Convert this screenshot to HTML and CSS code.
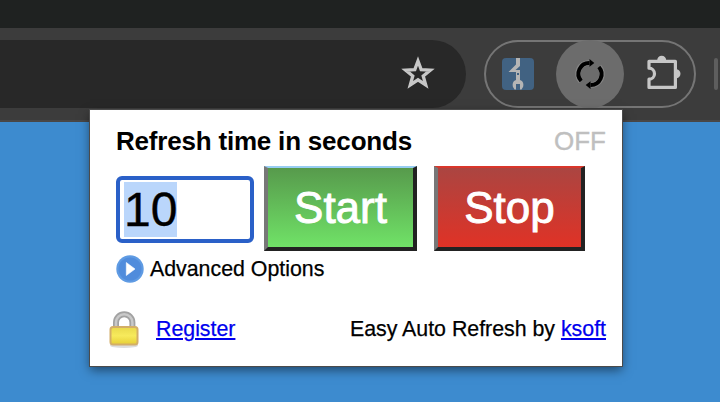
FILE: index.html
```html
<!DOCTYPE html>
<html lang="en">
<head>
<meta charset="utf-8">
<title>Easy Auto Refresh</title>
<link rel="stylesheet" href="styles.css">
</head>
<body>
<div class="tabstrip"></div>
<div class="toolbar">
  <div class="omnibox">
    <svg class="star" width="34" height="34" viewBox="0 0 34 34"><path d="M17 5l3.200 8.600 9.200.5-7.200 5.900 2.500 8.900-7.700-5.100-7.700 5.100 2.500-8.900-7.200-5.900 9.200-.5z" fill="none" stroke="#c7c7c7" stroke-width="3.300"/></svg>
  </div>
  <div class="extensions">
    <svg class="tool" width="32" height="32" viewBox="0 0 32 32">
      <rect width="32" height="32" rx="4" fill="#416282"/>
      <path d="M14 0h4v8l-4.500 4H18v10c3 1 4 4 3 7l-1.500 2.500H18V26h-4v5.500h-1.500L11 29c-1-3 0-6 3-7v-8H6.500L14 6.500z" fill="#b5b5b5"/>
      <rect x="15" y="15" width="2" height="2" fill="#416282"/>
    </svg>
    <div class="active">
      <svg width="34" height="34" viewBox="0 0 34 34">
        <g fill="none" stroke="#858585" stroke-width="5.500"><path d="M8 24.300A10.800 10.800 0 0 1 16.500 6"/><path d="M26 9.700A10.800 10.800 0 0 1 17.500 28"/></g>
        <g fill="none" stroke="#000" stroke-width="4"><path d="M8.200 24A10.800 10.800 0 0 1 16.500 6"/><path d="M25.800 10A10.800 10.800 0 0 1 17.500 28"/></g>
        <path d="M16.500 2l4.800 4-4.800 3.700zM17.500 24.300V32l-4.800-4z"/>
      </svg>
    </div>
    <svg class="puzzle" width="38" height="38" viewBox="0 0 38 38">
      <path d="M5 8.300H31.400V34.400H5V26.200A5.500 5.500 0 0 0 5 15.200z" fill="none" stroke="#c7c7c7" stroke-width="3.200" stroke-linejoin="round"/>
      <path d="M13.200 7.200a4.500 4.500 0 0 1 9 0zM32 16.200a4.500 4.500 0 0 1 0 9z" fill="#c7c7c7"/>
    </svg>
  </div>
  <div class="divider"></div>
</div>
<div class="popup">
  <div class="heading"><b>Refresh time in seconds</b><span class="status">OFF</span></div>
  <div class="controls">
    <div class="seconds"><span>10</span></div>
    <button class="start">Start</button>
    <button class="stop">Stop</button>
  </div>
  <div class="advanced">
    <svg width="28" height="28" viewBox="0 0 28 28"><circle cx="14" cy="14" r="13.700" fill="#5f9be3"/><circle cx="14" cy="14" r="11.500" fill="#508cdc"/><path d="M10.300 7.500L19 14l-8.700 6.500z" fill="#fff" stroke="#fff" stroke-width=".6"/></svg>
    <span>Advanced Options</span>
  </div>
  <div class="footer">
    <svg class="lock" width="32" height="40" viewBox="0 0 32 40">
      <defs><linearGradient id="gold" x2="0" y2="1"><stop stop-color="#e9d94b"/><stop offset=".5" stop-color="#f7ea5c"/><stop offset="1" stop-color="#e6cf35"/></linearGradient></defs>
      <ellipse cx="16" cy="35.500" rx="14" ry="2.500" fill="#ddd"/>
      <path d="M8 18V12.500a8.200 8.200 0 0 1 16.400 0V18" fill="none" stroke="#a2a2a2" stroke-width="6"/>
      <path d="M8 18V12.500a8.200 8.200 0 0 1 16.400 0V18" fill="none" stroke="#c9c9c9" stroke-width="2.500"/>
      <rect x="2.500" y="17" width="27" height="17.500" rx="2.500" fill="url(#gold)" stroke="#d3ae68" stroke-width="2"/>
    </svg>
    <a class="register" href="#">Register</a>
    <span class="credit">Easy Auto Refresh by <a href="#">ksoft</a></span>
  </div>
</div>
</body>
</html>
```
FILE: styles.css
```css
* { box-sizing: border-box; }
body {
  margin: 0;
  width: 720px;
  height: 402px;
  overflow: hidden;
  background: #3d8bcf;
  color: #000;
  font-family: "Liberation Sans", Arial, sans-serif;
}
svg { display: block; flex: none; }
.tabstrip { height: 28px; background: #1f2221; }
.toolbar {
  display: flex;
  height: 94px;
  padding-top: 12px;
  background: #3c3c3c;
  border-bottom: 2px solid #494747;
}
.omnibox {
  display: flex;
  justify-content: flex-end;
  width: 466px;
  height: 68px;
  padding: 16px 31px 0 0;
  border-radius: 0 34px 34px 0;
  background: #282828;
}
.extensions {
  display: flex;
  align-items: center;
  width: 212px;
  height: 68px;
  margin-left: 18px;
  padding-left: 16px;
  border: 2px solid #757575;
  border-radius: 34px;
}
.active {
  display: flex;
  align-items: center;
  justify-content: center;
  flex: none;
  width: 68px;
  height: 68px;
  margin-left: 22px;
  border-radius: 50%;
  background: #6c6c6c;
}
.puzzle { margin: -4px 0 0 20px; }
.divider {
  width: 4px;
  height: 32px;
  margin: 18px 0 0 18px;
  border-radius: 2px;
  background: #5e5e5e;
}
.popup {
  position: absolute;
  left: 90px;
  top: 110px;
  width: 532px;
  height: 256px;
  padding: 16px 16px 0 26px;
  background: #fff;
  box-shadow: 0 0 0 1px #4b4b4b, 0 4px 10px rgba(0, 0, 0, .5);
}
.heading {
  display: flex;
  justify-content: space-between;
  height: 40px;
  font-size: 26px;
  line-height: 30px;
  white-space: nowrap;
}
.heading b { letter-spacing: -.2px; }
.status { color: #bfbfbf; -webkit-text-stroke: .4px #bfbfbf; }
.controls { display: flex; height: 85px; }
.seconds {
  width: 138px;
  height: 67px;
  margin: 10px 10px 0 0;
  padding: 2px 4px;
  border: 4px solid #2a60c8;
  border-radius: 6px;
  font-size: 48px;
}
.seconds span {
  display: inline-block;
  height: 55px;
  line-height: 55px;
  background: #bad6fb;
  -webkit-text-stroke: .4px #000;
}
button {
  height: 85px;
  padding: 0;
  border-style: solid;
  border-width: 2px 4px 4px;
  color: #fff;
  font: 44px/79px "Liberation Sans", Arial, sans-serif;
  -webkit-text-stroke: .9px #fff;
}
.start {
  width: 153px;
  margin-right: 17px;
  border-color: #97cdf2 #222 #222 #777;
  background: linear-gradient(#579a4c, #70e267);
}
.stop {
  width: 151px;
  border-color: #d9362a #222 #222 #777;
  background: linear-gradient(#ab4541, #e03226);
}
.advanced {
  display: flex;
  align-items: center;
  gap: 6px;
  height: 28px;
  margin-top: 4px;
  font-size: 21.33px;
  -webkit-text-stroke: .25px;
}
.footer {
  display: flex;
  align-items: center;
  height: 40px;
  margin: 27px 0 0 -8px;
  font-size: 21.33px;
  -webkit-text-stroke: .25px;
}
a { color: #0000ee; text-decoration-thickness: 2px; text-underline-offset: 2px; }
.register { margin: -2px 0 0 16px; }
.credit { margin: -2px 0 0 auto; }
```
